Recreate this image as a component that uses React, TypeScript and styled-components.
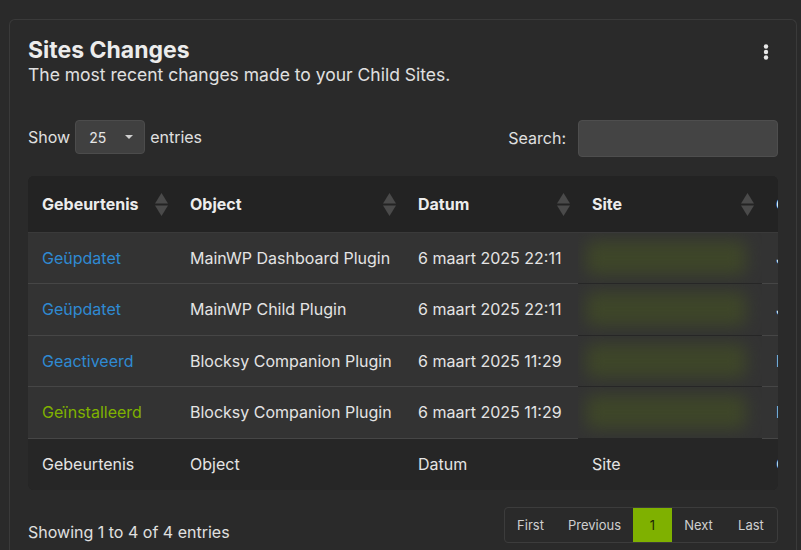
import styled, { createGlobalStyle } from 'styled-components'

const GlobalStyle = createGlobalStyle`
  html, body {
    margin: 0;
    padding: 0;
    background: #2a2a2a;
    font-family: Inter, 'Noto Sans', sans-serif;
    color: #e6e6e6;
    overflow: hidden;
  }
`

const Page = styled.div`
  padding: 19px 4px 0 9px;
  height: 550px;
  box-sizing: border-box;
`

const Card = styled.section`
  border: 1px solid #3a3a3a;
  border-bottom: none;
  border-radius: 6px 6px 0 0;
  padding: 16px 18px 0;
  height: 531px;
  box-sizing: border-box;
`

const Header = styled.div`
  display: flex;
  justify-content: space-between;
  align-items: flex-start;
`

const Title = styled.h2`
  margin: 0;
  font-size: 23px;
  line-height: 28px;
  font-weight: 700;
  color: #ececec;
`

const Subtitle = styled.p`
  margin: 0;
  font-size: 17.5px;
  line-height: 22px;
  color: #e0e0e0;
`

const MenuButton = styled.button`
  background: none;
  border: none;
  padding: 0;
  margin: 8px 8px 0 0;
  width: 8px;
  height: 16px;
  display: flex;
  align-items: center;
  justify-content: center;
  cursor: pointer;
`

const Controls = styled.div`
  display: flex;
  justify-content: space-between;
  align-items: flex-start;
  margin-top: 34px;
`

const Label = styled.label`
  display: flex;
  align-items: center;
  gap: 5px;
  font-size: 16px;
  line-height: 33px;
  color: #e0e0e0;
`

const Select = styled.div`
  width: 70px;
  height: 34px;
  box-sizing: border-box;
  background: #404040;
  border: 1px solid #4c4c4c;
  border-radius: 4px;
  display: flex;
  align-items: center;
  justify-content: space-between;
  padding: 0 11px 0 13px;
  font-size: 14px;
  color: #e6e6e6;
`

const Caret = styled.span`
  width: 0;
  height: 0;
  border-left: 4px solid transparent;
  border-right: 4px solid transparent;
  border-top: 4px solid #d0d0d0;
`

const SearchInput = styled.input`
  width: 200px;
  height: 37px;
  box-sizing: border-box;
  background: #444444;
  border: 1px solid #4e4e4e;
  border-radius: 4px;
  margin-left: 7px;
  outline: none;
  color: #eee;
  font: inherit;
`

const TableWrap = styled.div`
  margin-top: 19px;
  overflow: hidden;
  border-radius: 6px;
  background: #262626;
`

const Table = styled.table`
  border-collapse: collapse;
  width: 900px;
  font-size: 16px;
  table-layout: fixed;
`

const Th = styled.th<{ $w: number }>`
  position: relative;
  width: ${p => p.$w}px;
  height: 56px;
  box-sizing: border-box;
  padding: 0 14px;
  text-align: left;
  font-weight: 700;
  color: #ececec;
  background: #232323;
  border-bottom: 1px solid #3a3a3a;
`

const SortIcon = styled.svg`
  position: absolute;
  right: 8px;
  top: 17px;
`

const Row = styled.tr`
  background: #333333;
`

const Td = styled.td<{ $plain?: boolean }>`
  height: 51.5px;
  padding: 0 14px;
  box-sizing: border-box;
  white-space: nowrap;
  overflow: hidden;
  color: #e4e4e4;
  border-bottom: 1px solid ${p => (p.$plain ? 'transparent' : '#464646')};
`

const EventLink = styled.a<{ $tone: 'blue' | 'green' }>`
  color: ${p => (p.$tone === 'green' ? '#7fb100' : '#2f8ad2')};
  text-decoration: none;
`

const Blurred = styled.span`
  display: block;
  width: 160px;
  height: 34px;
  margin-left: -6px;
  background: #3e4629;
  border-radius: 8px;
  filter: blur(8px);
`

const FootCell = styled.td`
  height: 51px;
  padding: 0 14px;
  white-space: nowrap;
  color: #e4e4e4;
  background: #262626;
`

const Footer = styled.div`
  display: flex;
  justify-content: space-between;
  align-items: flex-end;
  margin-top: 17px;
`

const Info = styled.div`
  font-size: 16px;
  color: #e0e0e0;
  line-height: 22px;
`

const Pager = styled.div`
  display: flex;
  border: 1px solid #3c3c3c;
  border-radius: 4px;
  overflow: hidden;
  height: 36px;
  box-sizing: border-box;
`

const PageItem = styled.span<{ $active?: boolean; $w: number }>`
  width: ${p => p.$w}px;
  display: flex;
  align-items: center;
  justify-content: center;
  font-size: 13px;
  color: ${p => (p.$active ? '#1e2a05' : '#cfcfcf')};
  background: ${p => (p.$active ? '#7fb100' : 'transparent')};
`

const columns = [
  { label: 'Gebeurtenis', w: 148 },
  { label: 'Object', w: 228 },
  { label: 'Datum', w: 174 },
  { label: 'Site', w: 184 },
  { label: 'Gebruiker', w: 166 },
]

const rows: { event: string; tone: 'blue' | 'green'; object: string; date: string; user: string }[] = [
  { event: 'Geüpdatet', tone: 'blue', object: 'MainWP Dashboard Plugin', date: '6 maart 2025 22:11', user: 'Jan' },
  { event: 'Geüpdatet', tone: 'blue', object: 'MainWP Child Plugin', date: '6 maart 2025 22:11', user: 'Jan' },
  { event: 'Geactiveerd', tone: 'blue', object: 'Blocksy Companion Plugin', date: '6 maart 2025 11:29', user: 'Henk' },
  { event: 'Geïnstalleerd', tone: 'green', object: 'Blocksy Companion Plugin', date: '6 maart 2025 11:29', user: 'Henk' },
]

function Sort() {
  return (
    <SortIcon width="13" height="23" viewBox="0 0 13 23">
      <path d="M6.5 0 L13 10.5 L0 10.5 Z" fill="#4a4a4a" />
      <path d="M0 12.5 L13 12.5 L6.5 23 Z" fill="#4a4a4a" />
    </SortIcon>
  )
}

export default function App() {
  return (
    <Page>
      <GlobalStyle />
      <Card>
        <Header>
          <div>
            <Title>Sites Changes</Title>
            <Subtitle>The most recent changes made to your Child Sites.</Subtitle>
          </div>
          <MenuButton aria-label="Menu">
            <svg width="6" height="16" viewBox="0 0 6 16">
              <circle cx="3" cy="2.5" r="2.2" fill="#e8e8e8" />
              <circle cx="3" cy="8" r="2.2" fill="#e8e8e8" />
              <circle cx="3" cy="13.5" r="2.2" fill="#e8e8e8" />
            </svg>
          </MenuButton>
        </Header>

        <Controls>
          <Label>
            Show
            <Select>
              25
              <Caret />
            </Select>
            entries
          </Label>
          <Label>
            Search:
            <SearchInput />
          </Label>
        </Controls>

        <TableWrap>
          <Table>
            <thead>
              <tr>
                {columns.map(c => (
                  <Th key={c.label} $w={c.w}>
                    {c.label}
                    {c.label !== 'Gebruiker' && <Sort />}
                  </Th>
                ))}
              </tr>
            </thead>
            <tbody>
              {rows.map((r, i) => (
                <Row key={i}>
                  <Td>
                    <EventLink href="#" $tone={r.tone}>{r.event}</EventLink>
                  </Td>
                  <Td>{r.object}</Td>
                  <Td>{r.date}</Td>
                  <Td $plain>
                    <Blurred />
                  </Td>
                  <Td>{r.user}</Td>
                </Row>
              ))}
            </tbody>
            <tfoot>
              <tr>
                {columns.map(c => (
                  <FootCell key={c.label}>{c.label}</FootCell>
                ))}
              </tr>
            </tfoot>
          </Table>
        </TableWrap>

        <Footer>
          <Info>Showing 1 to 4 of 4 entries</Info>
          <Pager>
            <PageItem $w={51}>First</PageItem>
            <PageItem $w={77}>Previous</PageItem>
            <PageItem $w={39} $active>1</PageItem>
            <PageItem $w={53}>Next</PageItem>
            <PageItem $w={52}>Last</PageItem>
          </Pager>
        </Footer>
      </Card>
    </Page>
  )
}
